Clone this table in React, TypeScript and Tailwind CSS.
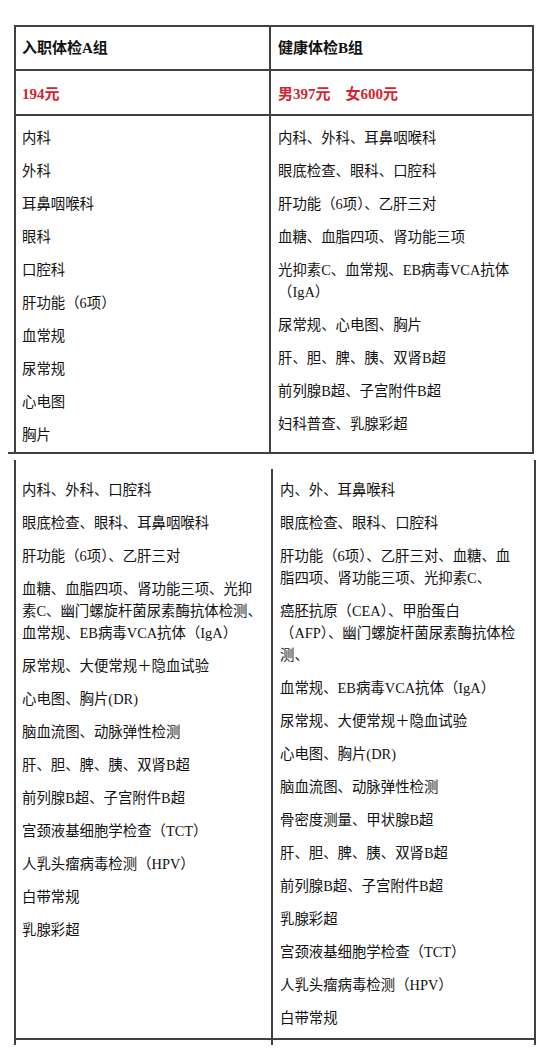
import React from "react";

type Item = string | string[];

const topLeft: Item[] = [
  "内科",
  "外科",
  "耳鼻咽喉科",
  "眼科",
  "口腔科",
  "肝功能（6项）",
  "血常规",
  "尿常规",
  "心电图",
  "胸片",
];

const topRight: Item[] = [
  "内科、外科、耳鼻咽喉科",
  "眼底检查、眼科、口腔科",
  "肝功能（6项）、乙肝三对",
  "血糖、血脂四项、肾功能三项",
  ["光抑素C、血常规、EB病毒VCA抗体", "（IgA）"],
  "尿常规、心电图、胸片",
  "肝、胆、脾、胰、双肾B超",
  "前列腺B超、子宫附件B超",
  "妇科普查、乳腺彩超",
];

const botLeft: Item[] = [
  "内科、外科、口腔科",
  "眼底检查、眼科、耳鼻咽喉科",
  "肝功能（6项）、乙肝三对",
  ["血糖、血脂四项、肾功能三项、光抑", "素C、幽门螺旋杆菌尿素酶抗体检测、", "血常规、EB病毒VCA抗体（IgA）"],
  "尿常规、大便常规＋隐血试验",
  "心电图、胸片(DR)",
  "脑血流图、动脉弹性检测",
  "肝、胆、脾、胰、双肾B超",
  "前列腺B超、子宫附件B超",
  "宫颈液基细胞学检查（TCT）",
  "人乳头瘤病毒检测（HPV）",
  "白带常规",
  "乳腺彩超",
];

const botRight: Item[] = [
  "内、外、耳鼻喉科",
  "眼底检查、眼科、口腔科",
  ["肝功能（6项）、乙肝三对、血糖、血", "脂四项、肾功能三项、光抑素C、"],
  ["癌胚抗原（CEA）、甲胎蛋白", "（AFP）、幽门螺旋杆菌尿素酶抗体检", "测、"],
  "血常规、EB病毒VCA抗体（IgA）",
  "尿常规、大便常规＋隐血试验",
  "心电图、胸片(DR)",
  "脑血流图、动脉弹性检测",
  "骨密度测量、甲状腺B超",
  "肝、胆、脾、胰、双肾B超",
  "前列腺B超、子宫附件B超",
  "乳腺彩超",
  "宫颈液基细胞学检查（TCT）",
  "人乳头瘤病毒检测（HPV）",
  "白带常规",
];

function List({ items }: { items: Item[] }) {
  return (
    <div className="flex flex-col gap-[11px]">
      {items.map((it, i) => (
        <div key={i} className="flex flex-col">
          {(Array.isArray(it) ? it : [it]).map((line, j) => (
            <div key={j} className="whitespace-nowrap leading-[22px]">
              {line}
            </div>
          ))}
        </div>
      ))}
    </div>
  );
}

export default function App() {
  return (
    <div className="w-[550px] h-[1055px] bg-white text-[#111111] text-[14.4px] font-['Liberation_Serif','Noto_Sans_CJK_SC','Noto_Sans_CJK_TC',sans-serif] overflow-hidden">
      <div className="h-[25px]" />
      {/* Top table */}
      <div className="ml-[14px] w-[520px] border-x-2 border-t-2 border-[#404040]">
        <div className="flex h-[44px] border-b-2 border-[#404040] font-bold text-[15px]">
          <div className="w-[255px] border-r-2 border-[#404040] pl-[6px] flex items-center">入职体检A组</div>
          <div className="flex-1 pl-[7px] flex items-center">健康体检B组</div>
        </div>
        <div className="flex h-[45px] border-b-2 border-[#404040] font-bold text-[15px] text-[#d2232e]">
          <div className="w-[255px] border-r-2 border-[#404040] pl-[6px] pt-[3px] flex items-center">194元</div>
          <div className="flex-1 pl-[7px] pt-[3px] flex items-center whitespace-pre">男397元　女600元</div>
        </div>
        <div className="flex h-[336px]">
          <div className="w-[255px] border-r-2 border-[#404040] pl-[6px] pt-[11px]">
            <List items={topLeft} />
          </div>
          <div className="flex-1 pl-[7px] pt-[11px]">
            <List items={topRight} />
          </div>
        </div>
      </div>
      <div className="ml-[8px] w-[526px] h-[2px] bg-[#404040]" />
      <div className="h-[6px]" />
      {/* Bottom table */}
      <div className="ml-[14px] w-[522px] border-x-2 border-[#404040] pt-[9px]">
        <div className="flex h-[571px] border-b-2 border-[#404040]">
          <div className="w-[257px] border-r-2 border-[#404040] pl-[6px] pt-[10px]">
            <List items={botLeft} />
          </div>
          <div className="flex-1 pl-[7px] pt-[10px]">
            <List items={botRight} />
          </div>
        </div>
        <div className="flex h-[5px]">
          <div className="w-[257px] border-r-2 border-[#404040]" />
          <div className="flex-1" />
        </div>
      </div>
    </div>
  );
}
